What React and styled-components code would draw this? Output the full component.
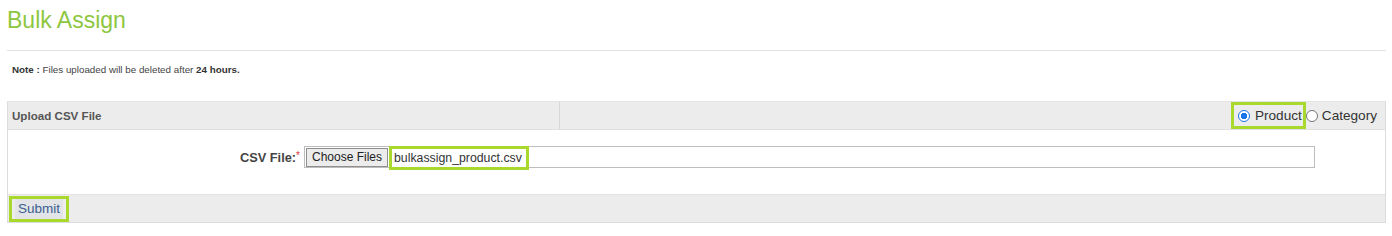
import styled, { createGlobalStyle } from "styled-components";

const GlobalStyle = createGlobalStyle`
  body {
    margin: 0;
    background: #fff;
    font-family: "Liberation Sans", Arial, sans-serif;
  }
`;

const Page = styled.div`
  padding: 0 6px 0 7px;
`;

const Title = styled.h1`
  margin: 0;
  padding-top: 6px;
  height: 50px;
  box-sizing: border-box;
  font-size: 23px;
  line-height: 28px;
  font-weight: normal;
  color: #8dc63f;
`;

const Rule = styled.div`
  border-top: 1px solid #e2e2e2;
`;

const Note = styled.p`
  margin: 0;
  padding: 13px 0 0 5px;
  height: 50px;
  box-sizing: border-box;
  font-size: 9.8px;
  color: #444;
  b {
    font-weight: bold;
    color: #333;
  }
`;

const Table = styled.div`
  border: 1px solid #dcdcdc;
  border-top-color: #e4e4e4;
`;

const HeadRow = styled.div`
  display: grid;
  grid-template-columns: 551px 1fr;
  grid-template-rows: 27px;
  height: 27px;
  background: #ececec;
  border-bottom: 1px solid #e0e0e0;
`;

const HeadCell = styled.div`
  display: flex;
  align-items: center;
  justify-content: ${(p) => (p.$right ? "flex-end" : "flex-start")};
  padding: ${(p) => (p.$right ? "0 8px 0 0" : "0 0 0 4px")};
  border-left: ${(p) => (p.$right ? "1px solid #d8d8d8" : "none")};
  font-size: 11.6px;
  font-weight: bold;
  color: #555;
`;

const Highlight = styled.span`
  display: inline-flex;
  align-items: center;
  border: 3px solid #a8d92c;
  box-sizing: border-box;
`;

const RadioLabel = styled.label`
  display: inline-flex;
  align-items: center;
  font-size: 13.6px;
  font-weight: normal;
  color: #333;
  height: ${(p) => (p.$boxed ? "21px" : "27px")};
  padding: ${(p) => (p.$boxed ? "0 1px 0 4px" : "0")};
`;

const Radio = styled.span`
  width: 12px;
  height: 12px;
  margin-right: ${(p) => (p.$on ? "5px" : "4px")};
  border-radius: 50%;
  box-sizing: border-box;
  border: 1px solid ${(p) => (p.$on ? "#1a73e8" : "#767676")};
  background: ${(p) =>
    p.$on ? "radial-gradient(circle, #1a73e8 0 3px, #fff 3.5px)" : "#fff"};
`;

const BodyRow = styled.div`
  display: grid;
  grid-template-columns: 296px 1011px 1fr;
  align-items: center;
  height: 64px;
  box-sizing: border-box;
`;

const FieldLabel = styled.div`
  text-align: right;
  font-size: 12.8px;
  font-weight: bold;
  color: #444;
  padding-right: 4px;
  margin-top: -10px;
  span {
    color: #d33;
    font-weight: normal;
    vertical-align: top;
    font-size: 10px;
  }
`;

const FileBox = styled.div`
  display: flex;
  align-items: center;
  height: 22px;
  box-sizing: border-box;
  border: 1px solid #bdbdbd;
  padding-left: 1px;
  margin-top: -10px;
`;

const FileButton = styled.span`
  display: inline-flex;
  align-items: center;
  height: 17px;
  padding: 0 5px;
  background: #ececec;
  border: 1px solid #8f8f8f;
  font-size: 12px;
  color: #222;
`;

const FileName = styled(Highlight)`
  height: 24px;
  margin: 0 0 -1px 1px;
  padding: 0 4px 0 2px;
  font-size: 12.3px;
  color: #333;
`;

const FootRow = styled.div`
  display: flex;
  align-items: center;
  height: 27px;
  padding-left: 1px;
  background: #ececec;
  border-top: 1px solid #e4e4e4;
`;

const SubmitBox = styled(Highlight)`
  width: 60px;
  height: 26px;
  justify-content: center;
`;

const SubmitButton = styled.button`
  border: none;
  background: #e2e4e8;
  color: #3a5f8f;
  font-family: inherit;
  font-size: 13.5px;
  padding: 1px 3px;
  height: 20px;
`;

function App() {
  return (
    <Page>
      <GlobalStyle />
      <Title>Bulk Assign</Title>
      <Rule />
      <Note>
        <b>Note :</b> Files uploaded will be deleted after <b>24 hours.</b>
      </Note>
      <Table>
        <HeadRow>
          <HeadCell>Upload CSV File</HeadCell>
          <HeadCell $right>
            <Highlight>
              <RadioLabel $boxed>
                <Radio $on />
                Product
              </RadioLabel>
            </Highlight>
            <RadioLabel>
              <Radio />
              Category
            </RadioLabel>
          </HeadCell>
        </HeadRow>
        <BodyRow>
          <FieldLabel>
            CSV File:<span>*</span>
          </FieldLabel>
          <FileBox>
            <FileButton>Choose Files</FileButton>
            <FileName>bulkassign_product.csv</FileName>
          </FileBox>
        </BodyRow>
        <FootRow>
          <SubmitBox>
            <SubmitButton>Submit</SubmitButton>
          </SubmitBox>
        </FootRow>
      </Table>
    </Page>
  );
}

export default App;
